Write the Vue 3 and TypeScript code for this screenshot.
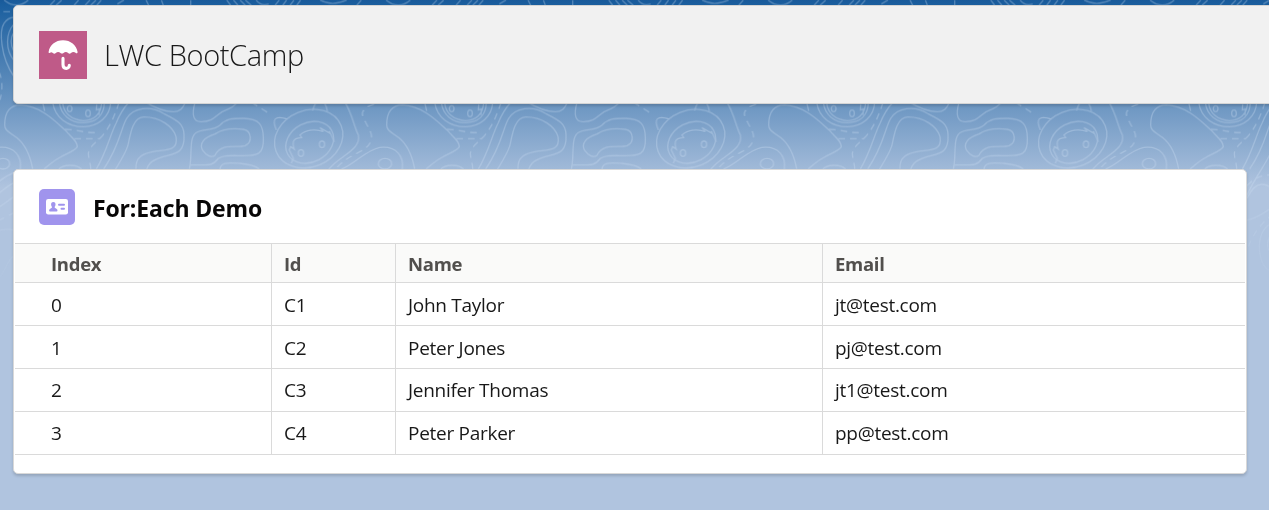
<script setup lang="ts">
interface Contact {
  id: string
  name: string
  email: string
}

const contacts: Contact[] = [
  { id: 'C1', name: 'John Taylor', email: 'jt@test.com' },
  { id: 'C2', name: 'Peter Jones', email: 'pj@test.com' },
  { id: 'C3', name: 'Jennifer Thomas', email: 'jt1@test.com' },
  { id: 'C4', name: 'Peter Parker', email: 'pp@test.com' },
]

const tiles: number[] = [-382, 0, 382, 764, 1146]
</script>

<template>
  <div class="page">
    <svg class="contours" width="1269" height="300" viewBox="0 0 1269 300" aria-hidden="true">
      <defs>
        <linearGradient id="fade" x1="0" y1="0" x2="0" y2="1">
          <stop offset="0" stop-color="#fff" />
          <stop offset="0.6" stop-color="#fff" />
          <stop offset="1" stop-color="#000" />
        </linearGradient>
        <mask id="fadeMask" maskUnits="userSpaceOnUse" x="0" y="0" width="1269" height="300">
          <rect width="1269" height="300" fill="url(#fade)" />
        </mask>
        <g id="tile" transform="scale(.33333)">
          <path d="M12 0Q50 30 85 0M150 16L165 0M168 16L185 0M222 16L236 0M255 16L270 0M272 16L288 0M290 16L304 0M352 12L372 0M438 0L446 16M484 0L490 16M572 0V16M680 0L692 16M700 0L714 16M720 0L736 16M736 0L754 16M768 0C780 16 794 16 806 12M825 16L838 0M848 16L860 0M870 16L882 0M890 16L902 0M960 0C985 14 1010 14 1040 0M1070 16L1084 0" />
          <path d="M42 52C30 52 20 58 12 70C-2 90 0 170 42 230M42 72C16 100 16 150 42 182M42 96C32 112 30 134 42 156" />
          <path class="dash" d="M10 35H40M-3 215C8 240 8 270 0 300" />
          <path d="M-10 552C10 530 25 525 42 518M-10 585C10 570 25 555 42 548M-10 625C10 615 25 600 42 590M-10 694C10 686 25 686 42 690M0 830C14 815 20 785 42 765" />
          <path class="dash" d="M-5 662L42 638" />
          <g transform="translate(0 285)">
            <path d="M98 222C90 180 78 150 50 128C30 112 14 108 14 90C14 50 30 30 62 30C120 32 165 78 195 105C215 128 232 138 232 155C225 168 200 175 180 187C160 197 145 212 132 222M176 222C190 210 225 205 245 222" />
            <path d="M158 22C165 70 205 95 250 95C295 94 330 65 332 22M178 22C182 60 212 83 250 83C290 82 312 60 313 22M188 22C190 55 215 75 250 77C285 75 303 55 305 22M290 28L289 45L298 42L297 60M128 22L134 48" />
            <ellipse cx="209" cy="41" rx="7" ry="9" /><ellipse cx="264" cy="55" rx="7" ry="10" />
            <path class="dash" d="M195 103C230 103 260 116 292 112M223 131H300M357 22C345 60 330 95 305 125C285 145 268 155 265 175C266 195 272 205 272 222" />
            <path d="M289 222C320 170 330 120 348 85C358 60 370 40 386 22M311 222C360 150 362 100 380 70C400 38 450 30 490 55C530 75 552 85 552 120C555 180 520 175 480 188C450 198 445 210 440 222M303 300C330 240 380 180 385 145C392 110 400 68 430 66C480 65 520 95 528 125C535 165 505 164 470 168C430 174 405 185 408 222" />
            <path d="M435 20C470 42 495 50 520 50C540 50 548 40 556 22M585 22C574 60 580 82 605 80C650 78 645 55 685 42C705 35 705 25 715 20M568 222C578 180 565 125 590 112C610 100 640 108 660 90C680 70 695 70 730 70C778 71 790 90 790 130C792 180 770 182 730 182C690 182 670 180 655 190C640 210 630 210 600 210H568" />
            <path d="M645 181C664 142 710 160 735 152C758 143 755 107 730 103C690 98 665 104 645 117C610 128 598 145 607 165C620 184 635 188 645 181M660 224C660 200 685 203 720 205C750 208 770 215 778 222" />
            <path class="dash" d="M755 22L810 57" />
            <g transform="translate(600 0)">
              <ellipse cx="326" cy="131" rx="105" ry="85" transform="rotate(-22 326 131)" />
              <ellipse cx="329" cy="142" rx="75" ry="59" transform="rotate(-28 329 142)" />
              <path d="M229 105C215 72 224 60 262 72M338 47C344 24 350 16 362 14C376 20 380 35 382 50M274 205L280 190L268 165L272 155L283 163C275 140 280 128 305 128L300 120C315 105 345 100 370 110L360 98L390 115L388 108L403 140" />
              <ellipse cx="303" cy="174" rx="8" ry="10" /><ellipse cx="366" cy="148" rx="8" ry="10" />
              <path d="M434 20C458 60 460 90 475 120C482 150 450 170 430 185C410 200 395 210 386 224M425 222C460 210 500 163 540 157C590 152 612 185 607 222" />
              <path class="dash" d="M522 28C490 35 480 55 492 70C500 95 515 105 515 130C510 155 490 165 470 175C440 190 420 205 406 224" />
              <ellipse cx="555" cy="206" rx="20" ry="16" />
            </g>
            <path d="M303 310C315 285 330 268 347 268C360 268 365 272 372 276M303 375C335 370 350 355 372 342M372 388C350 400 339 425 340 465C344 500 355 520 372 528M372 422C362 440 362 460 372 470" />
            <path class="dash" d="M303 272C325 250 345 240 372 240M307 455C320 420 345 385 372 365" />
          </g>
        </g>
      </defs>
      <g class="lines" mask="url(#fadeMask)">
        <use v-for="x in tiles" :key="x" href="#tile" :x="x" />
      </g>
    </svg>

    <header class="banner">
      <svg class="banner-icon" viewBox="0 0 48 48" aria-hidden="true">
        <rect width="48" height="48" fill="#bf5a88" />
        <path fill="#fff" d="M9.6 21C10.500 14 16.500 9.200 24 9.200S37.500 14 38.600 21C38.700 22.400 37.400 22.700 36.500 21.800C35.200 20.700 33.300 20.900 32 22.100C31 23 30 22.800 29.100 22C27.800 20.800 25.900 20.800 24.500 22C23.500 22.800 22.500 22.800 21.500 22C20.100 20.800 18.200 20.800 16.800 22C15.900 22.800 14.800 22.900 13.900 22C12.700 20.900 11.900 20.900 11 21.800C10.300 22.400 9.500 22 9.600 21Z" />
        <path fill="none" stroke="#fff" stroke-width="3.100" stroke-linecap="round" d="M24 27.400V33.500C24 38.500 30.300 38.500 30.300 34.300" />
      </svg>
      <h1>LWC BootCamp</h1>
    </header>

    <section class="card">
      <div class="card-head">
        <svg class="card-icon" viewBox="0 0 36 36" aria-hidden="true">
          <rect width="36" height="36" rx="5" fill="#a094ed" />
          <rect x="7" y="10" width="22" height="15.500" rx="2.200" fill="#fff" />
          <path fill="#a094ed" d="M14.300 13C16 13 16.700 14.200 16.500 15.800C16.400 17 15.900 17.500 15.600 18.100C15.500 19 16.400 19.200 17.400 19.700C18.300 20.200 18.500 20.900 18.500 21.600Q18.500 22.500 17.600 22.500H11Q10.100 22.500 10.100 21.600C10.100 20.900 10.400 20.200 11.300 19.700C12.200 19.200 13.100 19 13 18.100C12.700 17.500 12.200 17 12.100 15.800C11.900 14.200 12.700 13 14.300 13Z" />
          <path stroke="#a094ed" stroke-width="2" stroke-linecap="round" d="M20 15.800H25M22.500 19.800H25" />
        </svg>
        <h2>For:Each Demo</h2>
      </div>
      <table>
        <colgroup>
          <col class="c-index" />
          <col class="c-id" />
          <col class="c-name" />
          <col />
        </colgroup>
        <thead>
          <tr>
            <th>Index</th>
            <th>Id</th>
            <th>Name</th>
            <th>Email</th>
          </tr>
        </thead>
        <tbody>
          <tr v-for="(contact, index) in contacts" :key="contact.id">
            <td>{{ index }}</td>
            <td>{{ contact.id }}</td>
            <td>{{ contact.name }}</td>
            <td>{{ contact.email }}</td>
          </tr>
        </tbody>
      </table>
    </section>
  </div>
</template>

<style>
html,
body {
  margin: 0;
  overflow: hidden;
}
</style>

<style scoped>
.page {
  position: relative;
  box-sizing: border-box;
  height: 510px;
  padding: 5px 0 0 13px;
  overflow: hidden;
  background: linear-gradient(#195a9a 0, #1b5f9f 5px, #b0c4df 188px, #b0c4df 100%);
  font-family: 'Segoe UI', 'Open Sans', 'Noto Sans', sans-serif;
  color: #181818;
}

.contours {
  position: absolute;
  inset: 0 auto auto 0;
}

.lines {
  fill: none;
  stroke: #d3e3f6;
  stroke-width: 4;
  opacity: 0.32;
}

.dash {
  stroke-dasharray: 20 15;
}

.banner {
  position: relative;
  display: flex;
  align-items: center;
  box-sizing: border-box;
  width: 1300px;
  height: 99px;
  padding: 0 25px;
  border: 1px solid #d4d4d4;
  border-radius: 5px;
  background: #f1f1f1;
  box-shadow: 0 2px 3px rgba(0, 0, 0, 0.16);
}

.banner-icon {
  width: 48px;
  height: 48px;
}

h1 {
  margin: 0 0 0 17px;
  font-size: 29px;
  font-weight: 300;
  line-height: 36px;
  letter-spacing: -0.38px;
}

.card {
  position: relative;
  box-sizing: border-box;
  width: 1234px;
  height: 305px;
  margin-top: 65px;
  padding: 0 1px;
  border: 1px solid #d8d8d8;
  border-radius: 5px;
  background: #fff;
  box-shadow: 0 2px 3px rgba(0, 0, 0, 0.16);
}

.card-head {
  display: flex;
  align-items: center;
  height: 73px;
  padding: 0 24px;
}

.card-icon {
  width: 36px;
  height: 36px;
  margin-top: 1px;
}

h2 {
  margin: 2px 0 0 18px;
  color: #080707;
  font-size: 23px;
  font-weight: 700;
  line-height: 30px;
  letter-spacing: -0.15px;
}

table {
  width: 100%;
  table-layout: fixed;
  border-spacing: 0;
}

.c-index {
  width: 256px;
}

.c-id {
  width: 124px;
}

.c-name {
  width: 427px;
}

th,
td {
  box-sizing: border-box;
  height: 43px;
  padding: 1px 12px 0;
  border-top: 1px solid #dadada;
  font-size: 19px;
  font-weight: 370;
  line-height: 26px;
  letter-spacing: -0.28px;
  text-align: left;
}

th {
  height: 39px;
  background: #fafaf9;
  color: #514f4d;
  font-size: 18.5px;
  font-weight: 700;
}

th + th,
td + td {
  border-left: 1px solid #dadada;
}

th:first-child,
td:first-child {
  padding-left: 36px;
}

tbody tr:nth-child(n + 3) td {
  padding-top: 0;
}

tbody tr:last-child td {
  height: 44px;
  border-bottom: 1px solid #dadada;
}
</style>
